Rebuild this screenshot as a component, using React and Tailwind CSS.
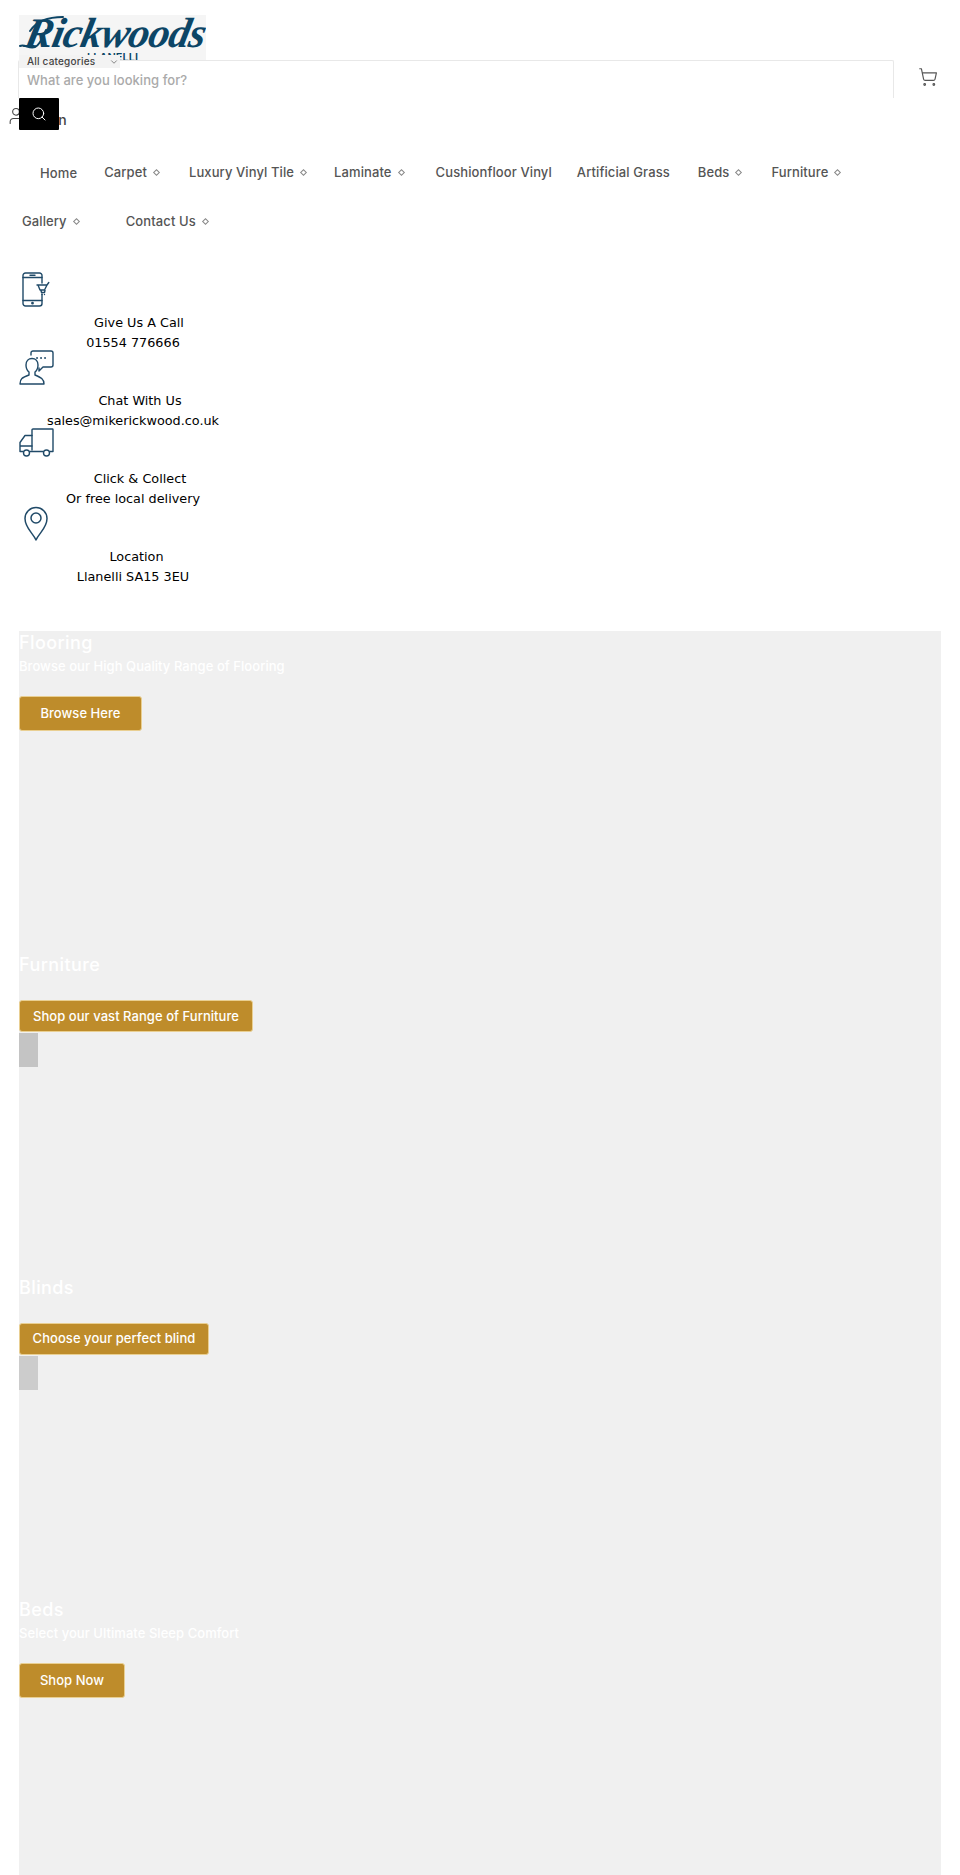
import React from 'react';
import { ChevronDown, Search, ShoppingCart, User } from 'lucide-react';

const navTop = [
  { label: 'Home', cls: 'ml-[40px] mt-[1px]' },
  { label: 'Carpet', menu: true, cls: 'ml-[27px]' },
  { label: 'Luxury Vinyl Tile', menu: true, cls: 'ml-[30px]' },
  { label: 'Laminate', menu: true, cls: 'ml-[28px]' },
  { label: 'Cushionfloor Vinyl', cls: 'ml-[32px]' },
  { label: 'Artificial Grass', cls: 'ml-[25px]' },
  { label: 'Beds', menu: true, cls: 'ml-[28px]' },
  { label: 'Furniture', menu: true, cls: 'ml-[30px]' },
];

function NavItem({ label, menu, cls }) {
  return (
    <a className={`flex items-center gap-[7px] whitespace-nowrap ${cls}`}>
      <span>{label}</span>
      {menu && <span className="block w-[5px] h-[5px] rotate-45 border border-[#888] mb-[2px]" />}
    </a>
  );
}

function PhoneIcon() {
  return (
    <svg viewBox="0 0 28 35" className="w-[28px] h-[35px] ml-[3px]" fill="none" stroke="#204a68" strokeWidth="1.4" strokeLinecap="round" strokeLinejoin="round">
      <path d="M20 11V3.500A2.500 2.500 0 0 0 17.500 1H3.500A2.500 2.500 0 0 0 1 3.500v28A2.500 2.500 0 0 0 3.500 34h14a2.500 2.500 0 0 0 2.500-2.500V22" />
      <path d="M1 5.500h19M1 28.500h19M8 3.200h5" />
      <circle cx="10.500" cy="31.200" r="0.700" />
      <path d="M15 13h10l1.800-2.500M16 13l2 5h4.500l2.500-5M19 18.500l.5 2h3l.5-2" />
      <path d="M20 22.500v.1M22.500 22.500v.1" />
    </svg>
  );
}

function ChatIcon() {
  return (
    <svg viewBox="0 0 35 35" className="w-[35px] h-[35px]" fill="none" stroke="#204a68" strokeWidth="1.4" strokeLinecap="round" strokeLinejoin="round">
      <path d="M12 5V3a2 2 0 0 1 2-2h18a2 2 0 0 1 2 2v12a2 2 0 0 1-2 2h-8l-4 4v-3" />
      <path d="M18 8h.1M22 8h.1M26 8h.1" strokeWidth="1.800" />
      <path d="M1 34c0-5 2-6.500 9-9v-3c-2-1.500-3-4-3-7 0-4 2.500-6.500 6-6.500s6 2.500 6 6.500c0 3-1 5.500-3 7v3c6 2.500 9 4 9 9z" />
    </svg>
  );
}

function TruckIcon() {
  return (
    <svg viewBox="0 0 35 29" className="w-[35px] h-[29px]" fill="none" stroke="#204a68" strokeWidth="1.4" strokeLinecap="round" strokeLinejoin="round">
      <path d="M13 22V2a1 1 0 0 1 1-1h19.500a.5.5 0 0 1 .5.5v22h-3" />
      <path d="M24 23.500H11M4 23.500H1v-9l5-7h7M1 18h12" />
      <circle cx="7.500" cy="25" r="3" />
      <circle cx="27.500" cy="25" r="3" />
    </svg>
  );
}

function PinIcon() {
  return (
    <svg viewBox="0 0 24 35" className="w-[24px] h-[35px] ml-[5px]" fill="none" stroke="#204a68" strokeWidth="1.5" strokeLinecap="round" strokeLinejoin="round">
      <path d="M12 34C9 27 1 22 1 12.500A11 11 0 0 1 23 12.500C23 22 15 27 12 34z" />
      <circle cx="12" cy="12" r="5" />
    </svg>
  );
}

const contacts = [
  { icon: <PhoneIcon />, title: 'Give Us A Call', text: '01554 776666', shift: 'ml-[12px]', top: 'mt-[6px]' },
  { icon: <ChatIcon />, title: 'Chat With Us', text: 'sales@mikerickwood.co.uk', shift: 'ml-[14px]', top: 'mt-[6px]' },
  { icon: <TruckIcon />, title: 'Click & Collect', text: 'Or free local delivery', shift: 'ml-[14px]', top: 'mt-[6px]' },
  { icon: <PinIcon />, title: 'Location', text: 'Llanelli SA15 3EU', shift: 'ml-[7px]', top: 'mt-[6px]' },
];

const slides = [
  { title: 'Flooring', sub: 'Browse our High Quality Range of Flooring', cta: 'Browse Here', btn: 'w-[123px] h-[35px] mt-[20px]' },
  { title: 'Furniture', cta: 'Shop our vast Range of Furniture', btn: 'w-[234px] h-[32px] mt-[23px]', box: 'bg-[#c4c4c4]' },
  { title: 'Blinds', cta: 'Choose your perfect blind', btn: 'w-[190px] h-[32px] mt-[23px]', box: 'bg-[#cccccc]' },
  { title: 'Beds', sub: 'Select your Ultimate Sleep Comfort', cta: 'Shop Now', btn: 'w-[106px] h-[35px] mt-[20px]' },
];

export default function App() {
  return (
    <div className="w-[960px] h-[1875px] overflow-hidden bg-white font-['Inter',sans-serif] text-[#555]">
      <header className="relative pt-[15px]">
        <div className="relative ml-[19px] w-[187px] h-[45px] bg-[#f5f5f5] overflow-hidden">
          <svg viewBox="0 0 187 45" className="absolute inset-0 w-[187px] h-[45px]" fill="none" stroke="#0c4566" strokeLinecap="round">
            <path d="M1 31c5-2 9 3 15 1 5-2 8-10 11-17" strokeWidth="2" />
            <path d="M11 16C17 7 29 2 44 2" strokeWidth="2" />
          </svg>
          <div className="relative font-['Liberation_Serif',serif] italic font-bold text-[#0c4566] text-[42px] leading-[36px] tracking-[-0.8px] whitespace-nowrap -skew-x-12 pl-[7px]">Rickwoods</div>
          <div className="relative text-center text-[#0c4566] text-[11px] font-semibold leading-[12px]">LLANELLI</div>
        </div>
        <div className="flex items-start">
          <div className="relative ml-[18px] w-[876px] h-[38px] bg-white border-t border-x border-[#e8e8e8] rounded-t-[2px]">
            <div className="absolute -top-[6px] left-0 w-[101px] h-[13px] bg-[#f3f3f3] flex items-center pl-[8px] gap-[14px] text-[10px] font-medium tracking-[0.2px] text-[#444] whitespace-nowrap">
              <span>All categories</span>
              <ChevronDown size={10} strokeWidth={1.5} />
            </div>
            <div className="pt-[10px] pl-[8px] text-[13px] leading-[18px] font-medium text-[#aaa] tracking-[0.05px]">What are you looking for?</div>
          </div>
          <ShoppingCart size={20} strokeWidth={1.4} className="ml-[24px] mt-[7px] text-[#555]" />
        </div>
        <div className="relative h-[33px] mt-[-1px] text-[#444] text-[14px]">
          <User size={20} strokeWidth={1.3} className="absolute left-[6px] top-[9px]" />
          <span className="absolute left-[26px] top-[12px] font-medium">Log in</span>
          <div className="absolute z-10 left-[19px] top-[1px] w-[40px] h-[32px] bg-black rounded-[1px] flex items-center justify-center">
            <Search size={16} strokeWidth={1.5} className="text-white" />
          </div>
        </div>
      </header>

      <nav className="text-[13px] font-medium tracking-[0.1px] text-[#555]">
        <div className="flex items-center h-[20px] mt-[33px]">
          {navTop.map((item) => <NavItem key={item.label} {...item} />)}
        </div>
        <div className="flex items-center h-[20px] mt-[29px]">
          <NavItem label="Gallery" menu cls="ml-[22px]" />
          <NavItem label="Contact Us" menu cls="ml-[47px]" />
        </div>
      </nav>

      <section className="mt-[40px] ml-[19px] w-[228px] font-['DejaVu_Sans',sans-serif] text-[12.800px] text-black">
        {contacts.map((c) => (
          <div key={c.title} className="h-[78px]">
            <div className="h-[35px]">{c.icon}</div>
            <div className={`${c.top} text-center leading-[20px]`}>
              <div className={c.shift}>{c.title}</div>
              <div>{c.text}</div>
            </div>
          </div>
        ))}
      </section>

      <main className="mt-[47px] ml-[19px] w-[922px] bg-[#f0f0f0] h-[1300px]">
        {slides.map((s) => (
          <div key={s.title} className="h-[322.400px] text-white">
            <h2 className="text-[18px] leading-[24px] font-medium tracking-[0.4px]">{s.title}</h2>
            {s.sub && <p className="text-[13px] leading-[20px] font-medium tracking-[0.05px] mt-[1px]">{s.sub}</p>}
            <a className={`flex items-center justify-center bg-[#be8c2b] border border-[#e9cf92] rounded-[3px] text-[13px] font-medium tracking-[0.05px] ${s.btn}`}>{s.cta}</a>
            {s.box && <div className={`w-[19px] h-[34px] mt-[1px] ${s.box}`} />}
          </div>
        ))}
      </main>
    </div>
  );
}
